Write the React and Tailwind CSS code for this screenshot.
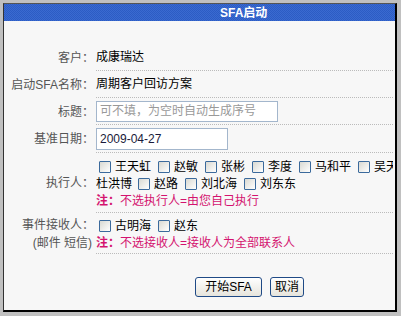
import React from "react";

const Cb = () => (
  <span className="inline-block w-[12px] h-[12px] shrink-0 border border-[#3b6a9c] bg-gradient-to-br from-[#d9d9d2] to-white rounded-[1px]" />
);

const Item = ({ name, first }) => (
  <span className={`flex items-center shrink-0 ${first ? "" : "ml-[7px]"}`}>
    <Cb />
    <span className="ml-[4px]">{name}</span>
  </span>
);

const Note = ({ children }) => (
  <div className="h-[17px] flex items-center text-[#d4136f] whitespace-nowrap">
    <span className="font-bold">注：</span>
    <span>{children}</span>
  </div>
);

export default function App() {
  const font = "font-['Liberation_Sans','Noto_Sans_CJK_SC',sans-serif]";
  return (
    <div className={`w-[401px] h-[316px] bg-[#c0c0c0] pt-[3px] pl-[3px] ${font} text-[12px] leading-[14px]`}>
      <div className="w-[394px] h-[309px] border-t border-l border-t-[#555] border-l-[#333] border-r-2 border-b-2 border-r-black border-b-black bg-[#f7f7f7] flex flex-col overflow-hidden">
        <div className="h-[17px] shrink-0 bg-[repeating-conic-gradient(#3a6ad0_0%_25%,#2c5cc4_0%_50%)] bg-[length:2px_2px] flex items-center pl-[216px] text-white font-bold">
          SFA启动
        </div>
        <div className="pt-[23px] grid grid-cols-[92px_297px]">
          {/* 客户 */}
          <div className="h-[27px] flex items-center justify-end pr-[2px] text-[#555]">客户：</div>
          <div className="h-[27px] flex items-center border-b border-dotted border-[#bbb] text-black">成康瑞达</div>

          {/* 启动SFA名称 */}
          <div className="h-[27px] flex items-center justify-end pr-[2px] text-[#555]">启动SFA名称：</div>
          <div className="h-[27px] flex items-center border-b border-dotted border-[#bbb] text-black">周期客户回访方案</div>

          {/* 标题 */}
          <div className="h-[27px] flex items-center justify-end pr-[2px] text-[#555]">标题：</div>
          <div className="h-[27px] flex items-center border-b border-dotted border-[#bbb]">
            <div className="w-[182px] h-[21px] border border-[#a3b6cc] bg-white flex items-center pl-[3px] text-[#999] whitespace-nowrap">
              可不填，为空时自动生成序号
            </div>
          </div>

          {/* 基准日期 */}
          <div className="h-[28px] flex items-center justify-end pr-[2px] text-[#555]">基准日期：</div>
          <div className="h-[28px] flex items-center border-b border-dotted border-[#bbb]">
            <div className="w-[132px] h-[22px] border border-[#a3b6cc] bg-white flex items-center pl-[3px] text-[#1a1a3a]">
              2009-04-27
            </div>
          </div>

          {/* 执行人 */}
          <div className="h-[60px] flex items-center justify-end pr-[2px] text-[#555]">执行人：</div>
          <div className="h-[60px] pt-[5px] border-b border-dotted border-[#bbb] overflow-hidden text-black">
            <div className="h-[17px] flex items-center whitespace-nowrap pl-[3px]">
              <Item name="王天虹" first />
              <Item name="赵敏" />
              <Item name="张彬" />
              <Item name="李度" />
              <Item name="马和平" />
              <Item name="吴天虹" />
            </div>
            <div className="h-[17px] flex items-center whitespace-nowrap">
              <span>杜洪博</span>
              <span className="ml-[6px] flex items-center"><Cb /><span className="ml-[4px]">赵路</span></span>
              <Item name="刘北海" />
              <Item name="刘东东" />
            </div>
            <Note>不选执行人=由您自己执行</Note>
          </div>

          {/* 事件接收人 */}
          <div className="h-[41px] flex flex-col justify-center items-end pr-[2px] text-[#555]">
            <div className="h-[18px] flex items-center">事件接收人：</div>
            <div className="h-[18px] flex items-center pr-[2px]">(邮件 短信)</div>
          </div>
          <div className="h-[41px] pt-[4px] border-b border-dotted border-[#bbb] text-black">
            <div className="h-[17px] flex items-center whitespace-nowrap pl-[3px]">
              <Item name="古明海" first />
              <Item name="赵东" />
            </div>
            <Note>不选接收人=接收人为全部联系人</Note>
          </div>
        </div>

        <div className="mt-[23px] pl-[191px] flex items-center">
          <button className="h-[20px] w-[67px] border border-[#1f4a86] rounded-[3px] bg-gradient-to-b from-white to-[#e6e4dc] text-black text-[12px] leading-[14px] flex items-center justify-center">
            开始SFA
          </button>
          <button className="ml-[8px] h-[20px] w-[34px] border border-[#1f4a86] rounded-[3px] bg-gradient-to-b from-white to-[#e6e4dc] text-black text-[12px] leading-[14px] flex items-center justify-center">
            取消
          </button>
        </div>
      </div>
    </div>
  );
}
